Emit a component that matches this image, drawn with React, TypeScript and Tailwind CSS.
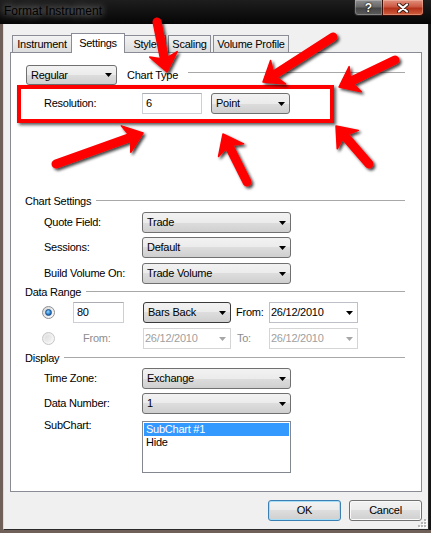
import React from "react";

type Pt = [number, number];

// Red annotation arrows: tail -> tip, page coordinates
const ARROWS: [number, number, number, number][] = [
  [157, 22, 167, 72],
  [333, 37, 263, 82],
  [395, 60, 339, 87],
  [56, 164, 143, 133],
  [247, 182, 223, 134],
  [369, 164, 336, 126],
];

function arrowGeometry(x1: number, y1: number, x2: number, y2: number) {
  const dx = x2 - x1;
  const dy = y2 - y1;
  const len = Math.hypot(dx, dy);
  const ux = dx / len;
  const uy = dy / len;
  const nx = -uy;
  const ny = ux;
  const L = 18;
  const hw = 14;
  const notch = 5;
  const bx = x2 - ux * L;
  const by = y2 - uy * L;
  const w1: Pt = [bx + nx * hw, by + ny * hw];
  const w2: Pt = [bx - nx * hw, by - ny * hw];
  const back: Pt = [x2 - ux * (L - notch), y2 - uy * (L - notch)];
  const head = [[x2, y2], w1, back, w2].map((p) => p.join(",")).join(" ");
  return { head, shaftEnd: back };
}

function Arrows() {
  return (
    <svg className="pointer-events-none absolute left-0 top-0" width="431" height="533" viewBox="0 0 431 533">
      <defs>
        <filter id="arrowShadow" x="-30%" y="-30%" width="160%" height="160%">
          <feDropShadow dx="2" dy="2" stdDeviation="1.4" floodColor="#000000" floodOpacity="0.75" />
        </filter>
      </defs>
      <g filter="url(#arrowShadow)">
        {ARROWS.map(([x1, y1, x2, y2], i) => {
          const g = arrowGeometry(x1, y1, x2, y2);
          return (
            <g key={i}>
              <line x1={x1} y1={y1} x2={g.shaftEnd[0]} y2={g.shaftEnd[1]} stroke="#ff0000" strokeWidth="9" strokeLinecap="round" />
              <polygon points={g.head} fill="#ff0000" stroke="#ff0000" strokeWidth="1.5" strokeLinejoin="round" />
            </g>
          );
        })}
      </g>
    </svg>
  );
}

function ComboArrow({ muted }: { muted?: boolean }) {
  return (
    <svg width="7" height="4" viewBox="0 0 7 4" className="shrink-0">
      <path d="M0 0H7L3.5 4Z" fill={muted ? "#a6a6a6" : "#000000"} />
    </svg>
  );
}

function Combo({ value, className, focused }: { value: string; className: string; focused?: boolean }) {
  const edge = focused ? "border-[#3a3a3a]" : "border-[#707070]";
  return (
    <div
      className={`flex shrink-0 items-center justify-between rounded-[3px] border ${edge} bg-[linear-gradient(to_bottom,#f2f2f2_0%,#ebebeb_50%,#dddddd_50%,#cfcfcf_100%)] pl-[4px] pr-[4px] ${className}`}
    >
      <span>{value}</span>
      <ComboArrow />
    </div>
  );
}

function DateBox({ value, disabled, className }: { value: string; disabled?: boolean; className: string }) {
  const look = disabled ? "border-[#d5d5d5] text-[#a0a0a0]" : "border-[#bdc1c7]";
  return (
    <div className={`flex h-[21px] shrink-0 items-center justify-between border bg-white pl-[1px] pr-[4px] ${look} ${className}`}>
      <span>{value}</span>
      <ComboArrow muted={disabled} />
    </div>
  );
}

function TextBox({ value, className }: { value: string; className: string }) {
  return (
    <div className={`flex h-[21px] shrink-0 items-center border border-[#ccd0d6] border-t-[#abadb3] bg-white pl-[3px] ${className}`}>
      {value}
    </div>
  );
}

function Radio({ checked }: { checked?: boolean }) {
  if (checked) {
    return (
      <div className="flex h-[13px] w-[13px] shrink-0 items-center justify-center rounded-full border border-[#8e8f8f] bg-[linear-gradient(to_bottom_right,#d6d6d6,#ffffff)]">
        <div className="h-[7px] w-[7px] rounded-full border border-[#1c4f8c] bg-[radial-gradient(circle_at_40%_35%,#8fdcff,#2a79c9_60%,#103f7c)]" />
      </div>
    );
  }
  return (
    <div className="flex h-[13px] w-[13px] shrink-0 items-center justify-center rounded-full border border-[#c6c6c6] bg-[linear-gradient(to_bottom_right,#e4e4e4,#fbfbfb)]">
      <div className="h-[7px] w-[7px] rounded-full bg-[linear-gradient(to_bottom_right,#dcdcdc,#f4f4f4)]" />
    </div>
  );
}

function GroupHeader({ title, className }: { title: string; className: string }) {
  return (
    <div className={`flex h-[14px] items-center pl-[14px] pr-[16px] ${className}`}>
      <span className="leading-[14px]">{title}</span>
      <div className="ml-[5px] h-px flex-1 -translate-y-[1px] bg-[#a8a8a8]" />
    </div>
  );
}

function FieldRow({ label, value, className }: { label: string; value: string; className: string }) {
  return (
    <div className={`flex items-center pl-[33px] ${className}`}>
      <span className="w-[98px] shrink-0">{label}</span>
      <Combo value={value} className="h-[21px] w-[149px]" />
    </div>
  );
}

function Tab({ label, className }: { label: string; className: string }) {
  return (
    <div
      className={`flex h-[17px] shrink-0 items-center justify-center border-t border-[#898c95] bg-[linear-gradient(to_bottom,#f3f3f3,#e8e8e8_50%,#dddddd)] ${className}`}
    >
      {label}
    </div>
  );
}

function CaptionButtons() {
  return (
    <div className="ml-auto mr-[7px] flex h-[16px] self-start">
      <div className="flex h-[16px] w-[28px] items-center justify-center rounded-bl-[4px] border border-t-0 border-r-0 border-[#262626] bg-[linear-gradient(to_bottom,#8e8e8e,#686868_45%,#454545_55%,#5e5e5e)] shadow-[inset_0_0_0_1px_rgba(255,255,255,0.25)]">
        <span className="text-[12px] font-bold leading-none tracking-normal text-white [text-shadow:0_0_2px_#000,0_0_1px_#000]">?</span>
      </div>
      <div className="flex h-[16px] w-[42px] items-center justify-center rounded-br-[4px] border border-t-0 border-[#3a0d06] bg-[linear-gradient(to_bottom,#e1917f,#cc5841_45%,#b3321a_55%,#d0603f)] shadow-[inset_0_0_0_1px_rgba(255,220,200,0.35)]">
        <svg width="12" height="10" viewBox="0 0 12 10">
          <path d="M2 1.5L10 8.5M10 1.5L2 8.5" stroke="#3a1a12" strokeWidth="4" strokeLinecap="round" />
          <path d="M2 1.5L10 8.5M10 1.5L2 8.5" stroke="#ffffff" strokeWidth="2.2" strokeLinecap="round" />
        </svg>
      </div>
    </div>
  );
}

function SizeGrip() {
  const dots: Pt[] = [
    [7, 1],
    [4, 4],
    [7, 4],
    [1, 7],
    [4, 7],
    [7, 7],
  ];
  return (
    <svg className="absolute bottom-[1px] right-[1px]" width="10" height="10" viewBox="0 0 10 10">
      {dots.map(([x, y], i) => (
        <g key={i}>
          <rect x={x + 1} y={y + 1} width="2" height="2" fill="#ffffff" />
          <rect x={x} y={y} width="2" height="2" fill="#b5b5b5" />
        </g>
      ))}
    </svg>
  );
}

export default function App() {
  return (
    <div className="relative h-[533px] w-[431px] select-none overflow-hidden bg-[#6f605a] font-['Liberation_Sans',Arial,sans-serif] text-[11px] tracking-[-0.25px] text-black">
      {/* title bar */}
      <div className="flex h-[24px] bg-[linear-gradient(to_bottom,#1e1e1e,#050505)]">
        <span className="pl-[4px] pt-[4px] text-[12px] leading-[14px] tracking-normal text-black [text-shadow:0_0_7px_rgba(255,255,255,0.6),0_0_14px_rgba(255,255,255,0.45),0_0_22px_rgba(255,255,255,0.3)]">
          Format Instrument
        </span>
        <CaptionButtons />
      </div>

      <div className="flex">
        <div className="h-[506px] w-[3px] bg-[#6f605a]" />
        {/* client area */}
        <div className="relative flex h-[506px] w-[426px] flex-col border-b border-l border-r border-b-[#2b2b2b] border-l-[#dcdcdc] border-r-[#2b2b2b] bg-[#f0f0f0] px-[6px] pt-[9px]">
          {/* tab strip */}
          <div className="flex h-[19px] items-end pl-[2px]">
            <Tab label="Instrument" className="w-[59px] border-l" />
            <div className="relative z-10 -mb-px flex h-[20px] w-[54px] shrink-0 items-center justify-center border border-b-0 border-[#898c95] bg-white">
              Settings
            </div>
            <Tab label="Style" className="w-[41px] border-r" />
            <Tab label="Scaling" className="ml-[2px] w-[43px] border-l border-r" />
            <Tab label="Volume Profile" className="ml-[2px] w-[76px] border-l border-r" />
          </div>

          {/* tab page */}
          <div className="relative flex h-[440px] flex-col border border-[#898c95] bg-white">
            <div className="mt-[12px] flex h-[20px] items-center pl-[15px] pr-[16px]">
              <Combo value="Regular" className="h-[20px] w-[91px]" />
              <span className="ml-[10px]">Chart Type</span>
              <div className="ml-[10px] h-px flex-1 -translate-y-[3px] bg-[#a8a8a8]" />
            </div>

            <div className="ml-[6px] h-[38px] w-[317px] border-4 border-[#ff0000] pl-[23px] pt-[4px] shadow-[2px_2px_3px_rgba(0,0,0,0.65)]">
              <div className="flex h-[21px] items-center">
                <span className="w-[98px] shrink-0">Resolution:</span>
                <TextBox value="6" className="w-[60px]" />
                <Combo value="Point" className="ml-[9px] h-[21px] w-[79px]" />
              </div>
            </div>

            <GroupHeader title="Chart Settings" className="mt-[71px]" />
            <FieldRow label="Quote Field:" value="Trade" className="mt-[4px]" />
            <FieldRow label="Sessions:" value="Default" className="mt-[4px]" />
            <FieldRow label="Build Volume On:" value="Trade Volume" className="mt-[5px]" />

            <GroupHeader title="Data Range" className="mt-[1px]" />
            <div className="mt-[3px] flex h-[21px] items-center pl-[31px]">
              <Radio checked />
              <TextBox value="80" className="ml-[18px] w-[51px]" />
              <Combo value="Bars Back" focused className="ml-[19px] h-[21px] w-[88px]" />
              <span className="ml-[5px] w-[33px] shrink-0">From:</span>
              <DateBox value="26/12/2010" className="w-[89px]" />
            </div>
            <div className="mt-[5px] flex h-[21px] items-center pl-[31px]">
              <Radio />
              <span className="ml-[28px] w-[60px] shrink-0 text-[#8d8d8d]">From:</span>
              <DateBox value="26/12/2010" disabled className="w-[88px]" />
              <span className="ml-[6px] w-[32px] shrink-0 text-[#8d8d8d]">To:</span>
              <DateBox value="26/12/2010" disabled className="w-[89px]" />
            </div>

            <GroupHeader title="Display" className="mt-[2px]" />
            <FieldRow label="Time Zone:" value="Exchange" className="mt-[3px]" />
            <FieldRow label="Data Number:" value="1" className="mt-[4px]" />
            <div className="mt-[7px] flex items-start pl-[33px]">
              <span className="-mt-[2px] w-[98px] shrink-0 leading-[13px]">SubChart:</span>
              <div className="h-[52px] w-[149px] shrink-0 border border-[#828790] bg-white p-[1px]">
                <div className="h-[13px] bg-[#3399ff] pl-[2px] leading-[13px] text-white">SubChart #1</div>
                <div className="h-[13px] pl-[2px] leading-[13px]">Hide</div>
              </div>
            </div>
          </div>

          {/* dialog buttons */}
          <div className="mt-[8px] flex justify-end gap-[8px]">
            <div className="flex h-[21px] w-[73px] items-center justify-center rounded-[3px] border border-[#3c7fb1] bg-[linear-gradient(to_bottom,#f2f2f2_0%,#ebebeb_50%,#dddddd_50%,#cfcfcf_100%)] shadow-[inset_0_0_0_1px_#a4def9]">
              OK
            </div>
            <div className="flex h-[21px] w-[73px] items-center justify-center rounded-[3px] border border-[#707070] bg-[linear-gradient(to_bottom,#f2f2f2_0%,#ebebeb_50%,#dddddd_50%,#cfcfcf_100%)] shadow-[inset_0_0_0_1px_#fafafa]">
              Cancel
            </div>
          </div>
          <SizeGrip />
        </div>
        <div className="h-[506px] w-[2px] bg-[#151515]" />
      </div>

      <Arrows />
    </div>
  );
}
